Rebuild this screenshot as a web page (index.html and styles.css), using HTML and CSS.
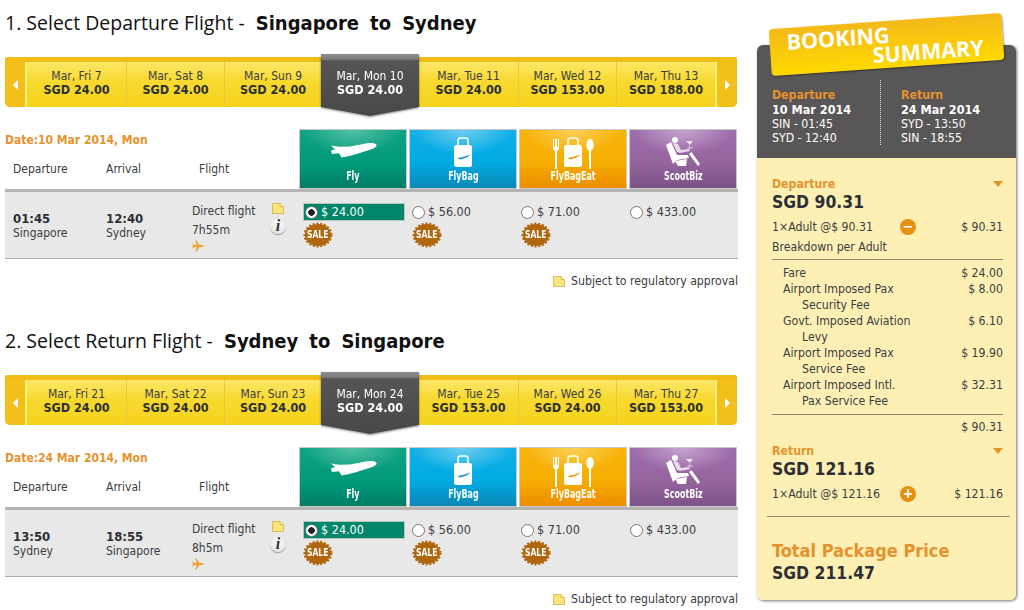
FILE: index.html
```html
<!DOCTYPE html>
<html lang="en">
<head>
    <meta charset="UTF-8">
    <meta name="viewport" content="width=device-width, initial-scale=1.0">
    <title>Select Flight</title>
    <link rel="stylesheet" href="styles.css">
</head>
<body>
    <svg class="sprite" aria-hidden="true">
        <symbol id="i-plane" viewBox="0 0 47 16">
            <path d="M46.5 3C45 .5 40 .8 33 2L20 4.500 9 4.800 1 3.500 5 7.200 1 8.500 2 12 9 11.200 11.500 15.500C20 14.500 30 11 39 8 43 6.800 47 5 46.500 3Z"/>
        </symbol>
        <symbol id="i-bag" viewBox="0 0 22 32">
            <path d="M6 8V3.500C6 2 7 1 8.500 1H13.500C15 1 16 2 16 3.500V8" fill="none" stroke="#fff" stroke-width="1.500"/>
            <rect x="2" y="8" width="18" height="22" rx="2.500" fill="#fff"/>
            <path d="M5 21C10 20.500 13 19.500 18 17.500 17 20 12 22 8 22.500Z" fill="currentColor"/>
        </symbol>
        <symbol id="i-fork" viewBox="0 0 8 30">
            <path d="M1 0V9C1 11 2.500 12 3 12.500V30H5V12.500C5.500 12 7 11 7 9V0H6V8H5V0H3V8H2V0Z" fill="#fff"/>
        </symbol>
        <symbol id="i-spoon" viewBox="0 0 8 30">
            <ellipse cx="4" cy="6" rx="3.700" ry="6" fill="#fff"/>
            <rect x="3" y="10" width="2" height="20" fill="#fff"/>
        </symbol>
        <symbol id="i-seat" viewBox="0 0 36 32">
            <circle cx="10" cy="3" r="3" fill="#fff"/>
            <path d="M1 8 6 5 12 18 23 18 24 21 12 23 8 27Z" fill="#fff"/>
            <path d="M8 6 13 7 16 13 24 12 25 14 15 16 12 15Z" fill="#fff" opacity=".75"/>
            <path d="M10 24 22 22 21 29 13 29Z" fill="#fff"/>
            <path d="M24 17 26.500 15 35 27 33 29Z" fill="#fff"/>
            <path d="M21 4H28L25 7.500V10.500H27.500V11.500H22.500V10.500H24.500V7.500Z" fill="#fff" opacity=".8"/>
        </symbol>
        <symbol id="i-note" viewBox="0 0 12 11">
            <path d="M.5 .5H8L11.500 3.500V10.500H.5Z" fill="#fbe47c" stroke="#d8bd58"/>
            <path d="M8 .5V3.500H11.500" fill="#fff6c4" stroke="#d8bd58"/>
        </symbol>
        <symbol id="i-sale" viewBox="0 0 30 26">
            <ellipse cx="15" cy="13" rx="13" ry="11" fill="#b0660c"/>
            <ellipse cx="15" cy="13" rx="13.500" ry="11.500" fill="none" stroke="#b0660c" stroke-width="2" stroke-dasharray="2 1.800"/>
        </symbol>
    </svg>

    <div class="page">
        <main class="flights">
            <section class="flight-block">
                <h2 class="block-title">1. Select Departure Flight - <b>Singapore</b> <b>to</b> <b>Sydney</b></h2>
                <div class="date-strip">
                    <div class="strip-nav left"><span class="arrow-left"></span></div>
                    <div class="day"><span>Mar, Fri 7</span><b>SGD 24.00</b></div>
                    <div class="day"><span>Mar, Sat 8</span><b>SGD 24.00</b></div>
                    <div class="day"><span>Mar, Sun 9</span><b>SGD 24.00</b></div>
                    <div class="day active"><div class="day-face"><span>Mar, Mon 10</span><b>SGD 24.00</b></div></div>
                    <div class="day"><span>Mar, Tue 11</span><b>SGD 24.00</b></div>
                    <div class="day"><span>Mar, Wed 12</span><b>SGD 153.00</b></div>
                    <div class="day"><span>Mar, Thu 13</span><b>SGD 188.00</b></div>
                    <div class="strip-nav right"><span class="arrow-right"></span></div>
                </div>
                <div class="fare-head">
                    <div class="head-left">
                        <div class="date-label">Date:10 Mar 2014, Mon</div>
                        <div class="head-cols"><span>Departure</span><span>Arrival</span><span>Flight</span></div>
                    </div>
                    <div class="tile fly">
                        <svg class="plane-big"><use href="#i-plane"/></svg>
                        <span>Fly</span>
                    </div>
                    <div class="tile flybag">
                        <svg class="tile-icon bag"><use href="#i-bag"/></svg>
                        <span>FlyBag</span>
                    </div>
                    <div class="tile flybageat">
                        <div class="eat-icons">
                            <svg class="cutlery"><use href="#i-fork"/></svg>
                            <svg class="tile-icon bag"><use href="#i-bag"/></svg>
                            <svg class="cutlery"><use href="#i-spoon"/></svg>
                        </div>
                        <span>FlyBagEat</span>
                    </div>
                    <div class="tile scootbiz">
                        <svg class="tile-icon seat"><use href="#i-seat"/></svg>
                        <span>ScootBiz</span>
                    </div>
                </div>
                <div class="flight-row">
                    <div class="place"><b>01:45</b><span>Singapore</span></div>
                    <div class="place"><b>12:40</b><span>Sydney</span></div>
                    <div class="flight-info">
                        <span>Direct flight</span>
                        <span>7h55m</span>
                        <svg class="mini-plane" viewBox="0 0 12 12"><path d="M11.500 6C11.500 5.300 10.500 5 9.500 5H7.500L4.500 .5H3.300L4.800 5H2.300L1.200 3.500H.3L1 6 .3 8.500H1.200L2.300 7H4.800L3.300 11.500H4.500L7.500 7H9.500C10.500 7 11.500 6.700 11.500 6Z"/></svg>
                    </div>
                    <div class="flight-icons">
                        <svg class="note"><use href="#i-note"/></svg>
                        <span class="info">i</span>
                    </div>
                    <div class="fare selected">
                        <label class="fare-price"><span class="radio on"></span>$ 24.00</label>
                        <div class="sale"><svg><use href="#i-sale"/></svg><span>SALE</span></div>
                    </div>
                    <div class="fare">
                        <label class="fare-price"><span class="radio"></span>$ 56.00</label>
                        <div class="sale"><svg><use href="#i-sale"/></svg><span>SALE</span></div>
                    </div>
                    <div class="fare">
                        <label class="fare-price"><span class="radio"></span>$ 71.00</label>
                        <div class="sale"><svg><use href="#i-sale"/></svg><span>SALE</span></div>
                    </div>
                    <div class="fare">
                        <label class="fare-price"><span class="radio"></span>$ 433.00</label>
                    </div>
                </div>
                <div class="reg-note"><svg class="note"><use href="#i-note"/></svg>Subject to regulatory approval</div>
            </section>

            <section class="flight-block">
                <h2 class="block-title">2. Select Return Flight - <b>Sydney</b> <b>to</b> <b>Singapore</b></h2>
                <div class="date-strip">
                    <div class="strip-nav left"><span class="arrow-left"></span></div>
                    <div class="day"><span>Mar, Fri 21</span><b>SGD 24.00</b></div>
                    <div class="day"><span>Mar, Sat 22</span><b>SGD 24.00</b></div>
                    <div class="day"><span>Mar, Sun 23</span><b>SGD 24.00</b></div>
                    <div class="day active"><div class="day-face"><span>Mar, Mon 24</span><b>SGD 24.00</b></div></div>
                    <div class="day"><span>Mar, Tue 25</span><b>SGD 153.00</b></div>
                    <div class="day"><span>Mar, Wed 26</span><b>SGD 24.00</b></div>
                    <div class="day"><span>Mar, Thu 27</span><b>SGD 153.00</b></div>
                    <div class="strip-nav right"><span class="arrow-right"></span></div>
                </div>
                <div class="fare-head">
                    <div class="head-left">
                        <div class="date-label">Date:24 Mar 2014, Mon</div>
                        <div class="head-cols"><span>Departure</span><span>Arrival</span><span>Flight</span></div>
                    </div>
                    <div class="tile fly">
                        <svg class="plane-big"><use href="#i-plane"/></svg>
                        <span>Fly</span>
                    </div>
                    <div class="tile flybag">
                        <svg class="tile-icon bag"><use href="#i-bag"/></svg>
                        <span>FlyBag</span>
                    </div>
                    <div class="tile flybageat">
                        <div class="eat-icons">
                            <svg class="cutlery"><use href="#i-fork"/></svg>
                            <svg class="tile-icon bag"><use href="#i-bag"/></svg>
                            <svg class="cutlery"><use href="#i-spoon"/></svg>
                        </div>
                        <span>FlyBagEat</span>
                    </div>
                    <div class="tile scootbiz">
                        <svg class="tile-icon seat"><use href="#i-seat"/></svg>
                        <span>ScootBiz</span>
                    </div>
                </div>
                <div class="flight-row">
                    <div class="place"><b>13:50</b><span>Sydney</span></div>
                    <div class="place"><b>18:55</b><span>Singapore</span></div>
                    <div class="flight-info">
                        <span>Direct flight</span>
                        <span>8h5m</span>
                        <svg class="mini-plane" viewBox="0 0 12 12"><path d="M11.500 6C11.500 5.300 10.500 5 9.500 5H7.500L4.500 .5H3.300L4.800 5H2.300L1.200 3.500H.3L1 6 .3 8.500H1.200L2.300 7H4.800L3.300 11.500H4.500L7.500 7H9.500C10.500 7 11.500 6.700 11.500 6Z"/></svg>
                    </div>
                    <div class="flight-icons">
                        <svg class="note"><use href="#i-note"/></svg>
                        <span class="info">i</span>
                    </div>
                    <div class="fare selected">
                        <label class="fare-price"><span class="radio on"></span>$ 24.00</label>
                        <div class="sale"><svg><use href="#i-sale"/></svg><span>SALE</span></div>
                    </div>
                    <div class="fare">
                        <label class="fare-price"><span class="radio"></span>$ 56.00</label>
                        <div class="sale"><svg><use href="#i-sale"/></svg><span>SALE</span></div>
                    </div>
                    <div class="fare">
                        <label class="fare-price"><span class="radio"></span>$ 71.00</label>
                        <div class="sale"><svg><use href="#i-sale"/></svg><span>SALE</span></div>
                    </div>
                    <div class="fare">
                        <label class="fare-price"><span class="radio"></span>$ 433.00</label>
                    </div>
                </div>
                <div class="reg-note"><svg class="note"><use href="#i-note"/></svg>Subject to regulatory approval</div>
            </section>
        </main>

        <aside class="summary">
            <div class="summary-banner"><span>BOOKING</span><span class="second">SUMMARY</span></div>
            <div class="summary-head">
                <div class="trip-col">
                    <div class="trip-label">Departure</div>
                    <b>10 Mar 2014</b>
                    <span>SIN - 01:45</span>
                    <span>SYD - 12:40</span>
                </div>
                <div class="trip-col">
                    <div class="trip-label">Return</div>
                    <b>24 Mar 2014</b>
                    <span>SYD - 13:50</span>
                    <span>SIN - 18:55</span>
                </div>
            </div>
            <div class="summary-body">
                <div class="leg-title">Departure<span class="caret"></span></div>
                <div class="leg-price">SGD 90.31</div>
                <div class="pax-row">
                    <span>1×Adult @$ 90.31</span>
                    <span class="round-btn">&minus;</span>
                    <span class="amount">$ 90.31</span>
                </div>
                <div class="breakdown-title">Breakdown per Adult</div>
                <div class="breakdown">
                    <div class="fee"><span class="fee-name">Fare</span><span>$ 24.00</span></div>
                    <div class="fee"><span class="fee-name">Airport Imposed Pax Security Fee</span><span>$ 8.00</span></div>
                    <div class="fee"><span class="fee-name">Govt. Imposed Aviation Levy</span><span>$ 6.10</span></div>
                    <div class="fee"><span class="fee-name">Airport Imposed Pax Service Fee</span><span>$ 19.90</span></div>
                    <div class="fee"><span class="fee-name">Airport Imposed Intl. Pax Service Fee</span><span>$ 32.31</span></div>
                </div>
                <div class="breakdown-total">$ 90.31</div>
                <div class="leg-title return">Return<span class="caret"></span></div>
                <div class="leg-price">SGD 121.16</div>
                <div class="pax-row">
                    <span>1×Adult @$ 121.16</span>
                    <span class="round-btn">+</span>
                    <span class="amount">$ 121.16</span>
                </div>
                <div class="package">
                    <div class="package-label">Total Package Price</div>
                    <div class="leg-price">SGD 211.47</div>
                </div>
            </div>
        </aside>
    </div>
</body>
</html>
```

FILE: styles.css
```css
:root {
    --text: #3a3d42;
    --text-dark: #2c3036;
    --orange: #e6922c;
    --panel: #fef0b4;
    --rule: #8f8a70;
}

* {
    box-sizing: border-box;
}

html, body {
    height: 610px;
    overflow: hidden;
}

body {
    margin: 0;
    background-color: white;
    color: var(--text);
    font-family: "DejaVu Sans", sans-serif;
    font-stretch: condensed;
    font-size: 12.2px;
    line-height: 16px;
}

.sprite {
    display: none;
}

.page {
    display: flex;
    align-items: flex-start;
    padding-left: 5px;
}

.flights {
    width: 733px;
    flex: none;
}

.flight-block {
    height: 318px;
    padding-top: 8px;
}

.block-title {
    margin: 0;
    height: 30px;
    color: #111;
    font-family: "Open Sans", sans-serif;
    font-stretch: normal;
    font-size: 19.5px;
    font-weight: normal;
    line-height: 30px;
    white-space: nowrap;
}

.block-title b {
    margin-left: 6px;
    font-family: "DejaVu Sans", sans-serif;
    font-stretch: condensed;
    font-weight: bold;
    font-size: 20px;
}

/* date strip */
.date-strip {
    display: flex;
    align-items: flex-start;
    width: 732px;
    height: 50px;
    margin-top: 19px;
    border-radius: 2px 2px 5px 5px;
    background: #f3bd18;
    padding-top: 5px;
}

.strip-nav {
    display: flex;
    align-items: center;
    justify-content: center;
    width: 22px;
    height: 45px;
    background: #f3bf1a;
}

.strip-nav.left {
    border-right: 2px solid #fff27a;
    border-radius: 0 0 0 5px;
}

.strip-nav.right {
    border-left: 2px solid #fff27a;
    border-radius: 0 0 5px 0;
}

.arrow-left, .arrow-right {
    width: 0;
    height: 0;
    border-top: 5px solid transparent;
    border-bottom: 5px solid transparent;
}

.arrow-left {
    border-right: 5px solid white;
}

.arrow-right {
    border-left: 5px solid white;
}

.day {
    display: flex;
    flex-direction: column;
    align-items: center;
    width: 98px;
    height: 45px;
    padding-top: 7px;
    font-size: 12px;
    line-height: 14px;
    background: linear-gradient(#fde868, #f7d82e 45%, #f5d31c);
    border-right: 1px solid #e8c63e;
}

.day:nth-child(2), .day:nth-child(6) {
    width: 100px;
}

.day:nth-child(4) {
    width: 96px;
    border-right: none;
}

.day:nth-last-child(2) {
    border-right: none;
}

.day b {
    color: var(--text-dark);
    font-size: 12.5px;
}

.day.active {
    height: 63px;
    margin-top: -8px;
    padding: 0;
    background: none;
    border: none;
    color: white;
    filter: drop-shadow(0 1px 1px rgba(0, 0, 0, 0.45));
}

.day-face {
    display: flex;
    flex-direction: column;
    align-items: center;
    width: 100%;
    height: 100%;
    padding-top: 15px;
    background: linear-gradient(#8e8e8e, #7c7c7c 5px, #555 7px, #484848);
    clip-path: polygon(0 0, 100% 0, 100% 53px, 50% 62px, 0 53px);
}

.day-face b {
    color: white;
}

/* fare header */
.fare-head {
    display: flex;
    margin-top: 22px;
    height: 60px;
}

.head-left {
    width: 294px;
    flex: none;
}

.date-label {
    margin-top: 3px;
    color: var(--orange);
    font-weight: bold;
    font-size: 12px;
}

.head-cols {
    display: grid;
    grid-template-columns: 93px 93px 1fr;
    margin-top: 13px;
    padding-left: 8px;
    font-size: 12px;
}

.tile {
    display: flex;
    flex-direction: column;
    align-items: center;
    justify-content: flex-end;
    width: 108px;
    flex: none;
    margin-right: 2px;
    padding-bottom: 5px;
    border: 1px solid #c9c9c9;
    color: white;
}

.tile:last-child {
    margin-right: 0;
}

.tile span {
    font-size: 13px;
    font-weight: bold;
    line-height: 14px;
    transform: scaleX(0.68);
}

.tile svg {
    fill: white;
}

.fly {
    background: radial-gradient(ellipse 50px 24px at 50% 0, #52c0a4, transparent), linear-gradient(#0fa382, #00997a 60%, #007c66);
}

.flybag {
    background: radial-gradient(ellipse 50px 24px at 50% 0, #6ccdf0, transparent), linear-gradient(#12afe6, #00abe2 55%, #0b88b6);
}

.flybageat {
    background: radial-gradient(ellipse 50px 24px at 50% 0, #fbcf55, transparent), linear-gradient(#f8b30a, #f5ae02 55%, #ed8d00);
}

.scootbiz {
    background: radial-gradient(ellipse 50px 24px at 50% 0, #c5a3cf, transparent), linear-gradient(#9d6dab, #96659f 55%, #7d5287);
}

.plane-big {
    width: 47px;
    height: 16px;
    margin-bottom: 11px;
}

.tile-icon.bag {
    width: 22px;
    height: 32px;
    color: #2a9ccc;
}

.flybageat .tile-icon.bag {
    color: #f2a010;
}

.tile-icon.seat {
    width: 36px;
    height: 32px;
}

.eat-icons {
    display: flex;
    align-items: flex-end;
    gap: 2px;
}

.cutlery {
    width: 8px;
    height: 30px;
}

/* flight row */
.flight-row {
    display: grid;
    grid-template-columns: 93px 86px 80px 31px 109px 109px 109px 1fr;
    height: 70px;
    padding-left: 8px;
    background-color: #e8e8e8;
    border-top: 3px solid #b4b4b4;
    border-bottom: 1px solid #aaa;
    font-size: 12px;
}

.place {
    display: flex;
    flex-direction: column;
    padding-top: 19px;
    line-height: 15px;
}

.place b {
    font-size: 13px;
    color: var(--text-dark);
}

.flight-info {
    display: flex;
    flex-direction: column;
    align-items: flex-start;
    padding-top: 10px;
    line-height: 19px;
}

.mini-plane {
    width: 12px;
    height: 12px;
    fill: #efa02e;
}

.flight-icons {
    display: flex;
    flex-direction: column;
    align-items: flex-start;
    padding-top: 11px;
}

.note {
    width: 12px;
    height: 11px;
    flex: none;
}

.info {
    display: block;
    width: 16px;
    height: 16px;
    margin: 4px 0 0 -2px;
    border-radius: 50%;
    background: radial-gradient(circle at 50% 35%, white, #e4e4e4 70%, #bbb);
    box-shadow: 0 1px 1px #999;
    color: #333;
    font-family: "Liberation Serif", serif;
    font-stretch: normal;
    font-size: 16px;
    font-style: italic;
    font-weight: bold;
    line-height: 16px;
    text-align: center;
}

.fare {
    padding-top: 11px;
}

.fare-price {
    display: flex;
    align-items: center;
    gap: 3px;
    width: 102px;
    height: 18px;
    font-size: 12.5px;
}

.fare.selected .fare-price {
    background-color: #00876a;
    border: 1px solid #b9c6c0;
    color: white;
}

.radio {
    width: 13px;
    height: 13px;
    flex: none;
    border-radius: 50%;
    border: 1px solid #777;
    background-color: white;
}

.radio.on {
    margin-left: 1px;
    background: radial-gradient(circle, #222 3px, white 3.5px);
}

.sale {
    display: grid;
    width: 30px;
    height: 26px;
    margin-top: 1px;
    place-items: center;
}

.sale svg, .sale span {
    grid-area: 1 / 1;
}

.sale svg {
    width: 30px;
    height: 26px;
}

.sale span {
    position: relative;
    color: white;
    font-size: 10px;
    font-weight: bold;
    transform: scaleX(0.85);
}

.reg-note {
    display: flex;
    align-items: center;
    justify-content: flex-end;
    gap: 6px;
    margin-top: 14px;
}

/* summary */
.summary {
    position: relative;
    width: 259px;
    flex: none;
    margin: 45px 0 0 19px;
    border-radius: 6px;
    box-shadow: 1px 1px 3px rgba(0, 0, 0, 0.55);
}

.summary-banner {
    position: absolute;
    top: -24px;
    left: 13px;
    display: flex;
    flex-direction: column;
    width: 233px;
    height: 47px;
    padding: 4px 0 0 17px;
    border-radius: 4px;
    background: linear-gradient(#f3b91a, #ffd900);
    box-shadow: 1px 1px 2px rgba(0, 0, 0, 0.4);
    color: white;
    font-family: "Open Sans", sans-serif;
    font-stretch: normal;
    font-size: 21.5px;
    font-weight: bold;
    line-height: 19px;
    transform: rotate(-4deg);
}

.summary-banner .second {
    padding-left: 85px;
}

.summary-head {
    display: grid;
    grid-template-columns: 108px 1fr;
    height: 113px;
    padding: 42px 0 0 15px;
    border-radius: 6px 6px 0 0;
    background-color: #585657;
    color: white;
}

.trip-col {
    display: flex;
    flex-direction: column;
    height: 65px;
    line-height: 14px;
}

.trip-col + .trip-col {
    height: 65px;
    margin-top: -7px;
    padding: 7px 0 0 20px;
    border-left: 1px dotted #ddd;
}

.trip-label {
    color: var(--orange);
    font-weight: bold;
    line-height: 16px;
}

.trip-col b {
    font-size: 12.5px;
}

.summary-body {
    height: 442px;
    padding: 19px 13px 0 15px;
    border-radius: 0 0 6px 6px;
    background-color: var(--panel);
}

.leg-title {
    display: flex;
    align-items: center;
    justify-content: space-between;
    color: var(--orange);
    font-weight: bold;
    line-height: 14px;
}

.leg-title.return {
    margin-top: 9px;
}

.caret {
    width: 0;
    height: 0;
    border-left: 5px solid transparent;
    border-right: 5px solid transparent;
    border-top: 6px solid var(--orange);
}

.leg-price {
    color: var(--text-dark);
    font-size: 17.4px;
    font-weight: bold;
    line-height: 22px;
}

.pax-row {
    display: grid;
    grid-template-columns: 128px 16px 1fr;
    align-items: center;
    margin-top: 6px;
}

.amount {
    text-align: right;
}

.round-btn {
    width: 16px;
    height: 16px;
    border-radius: 50%;
    background-color: #e69013;
    color: white;
    font-size: 14px;
    font-weight: bold;
    line-height: 15px;
    text-align: center;
}

.breakdown-title {
    margin-top: 4px;
}

.breakdown {
    margin-top: 4px;
    padding: 5px 0 5px 11px;
    border-top: 1px solid var(--rule);
    border-bottom: 1px solid var(--rule);
}

.fee {
    display: flex;
    justify-content: space-between;
}

.fee-name {
    width: 133px;
    padding-left: 19px;
    text-indent: -19px;
}

.breakdown-total {
    margin-top: 4px;
    text-align: right;
}

.package {
    margin: 14px -7px 0 -5px;
    padding: 22px 7px 0 5px;
    border-top: 1px solid var(--rule);
}

.package-label {
    color: var(--orange);
    font-size: 18px;
    font-weight: bold;
    line-height: 23px;
}
```
